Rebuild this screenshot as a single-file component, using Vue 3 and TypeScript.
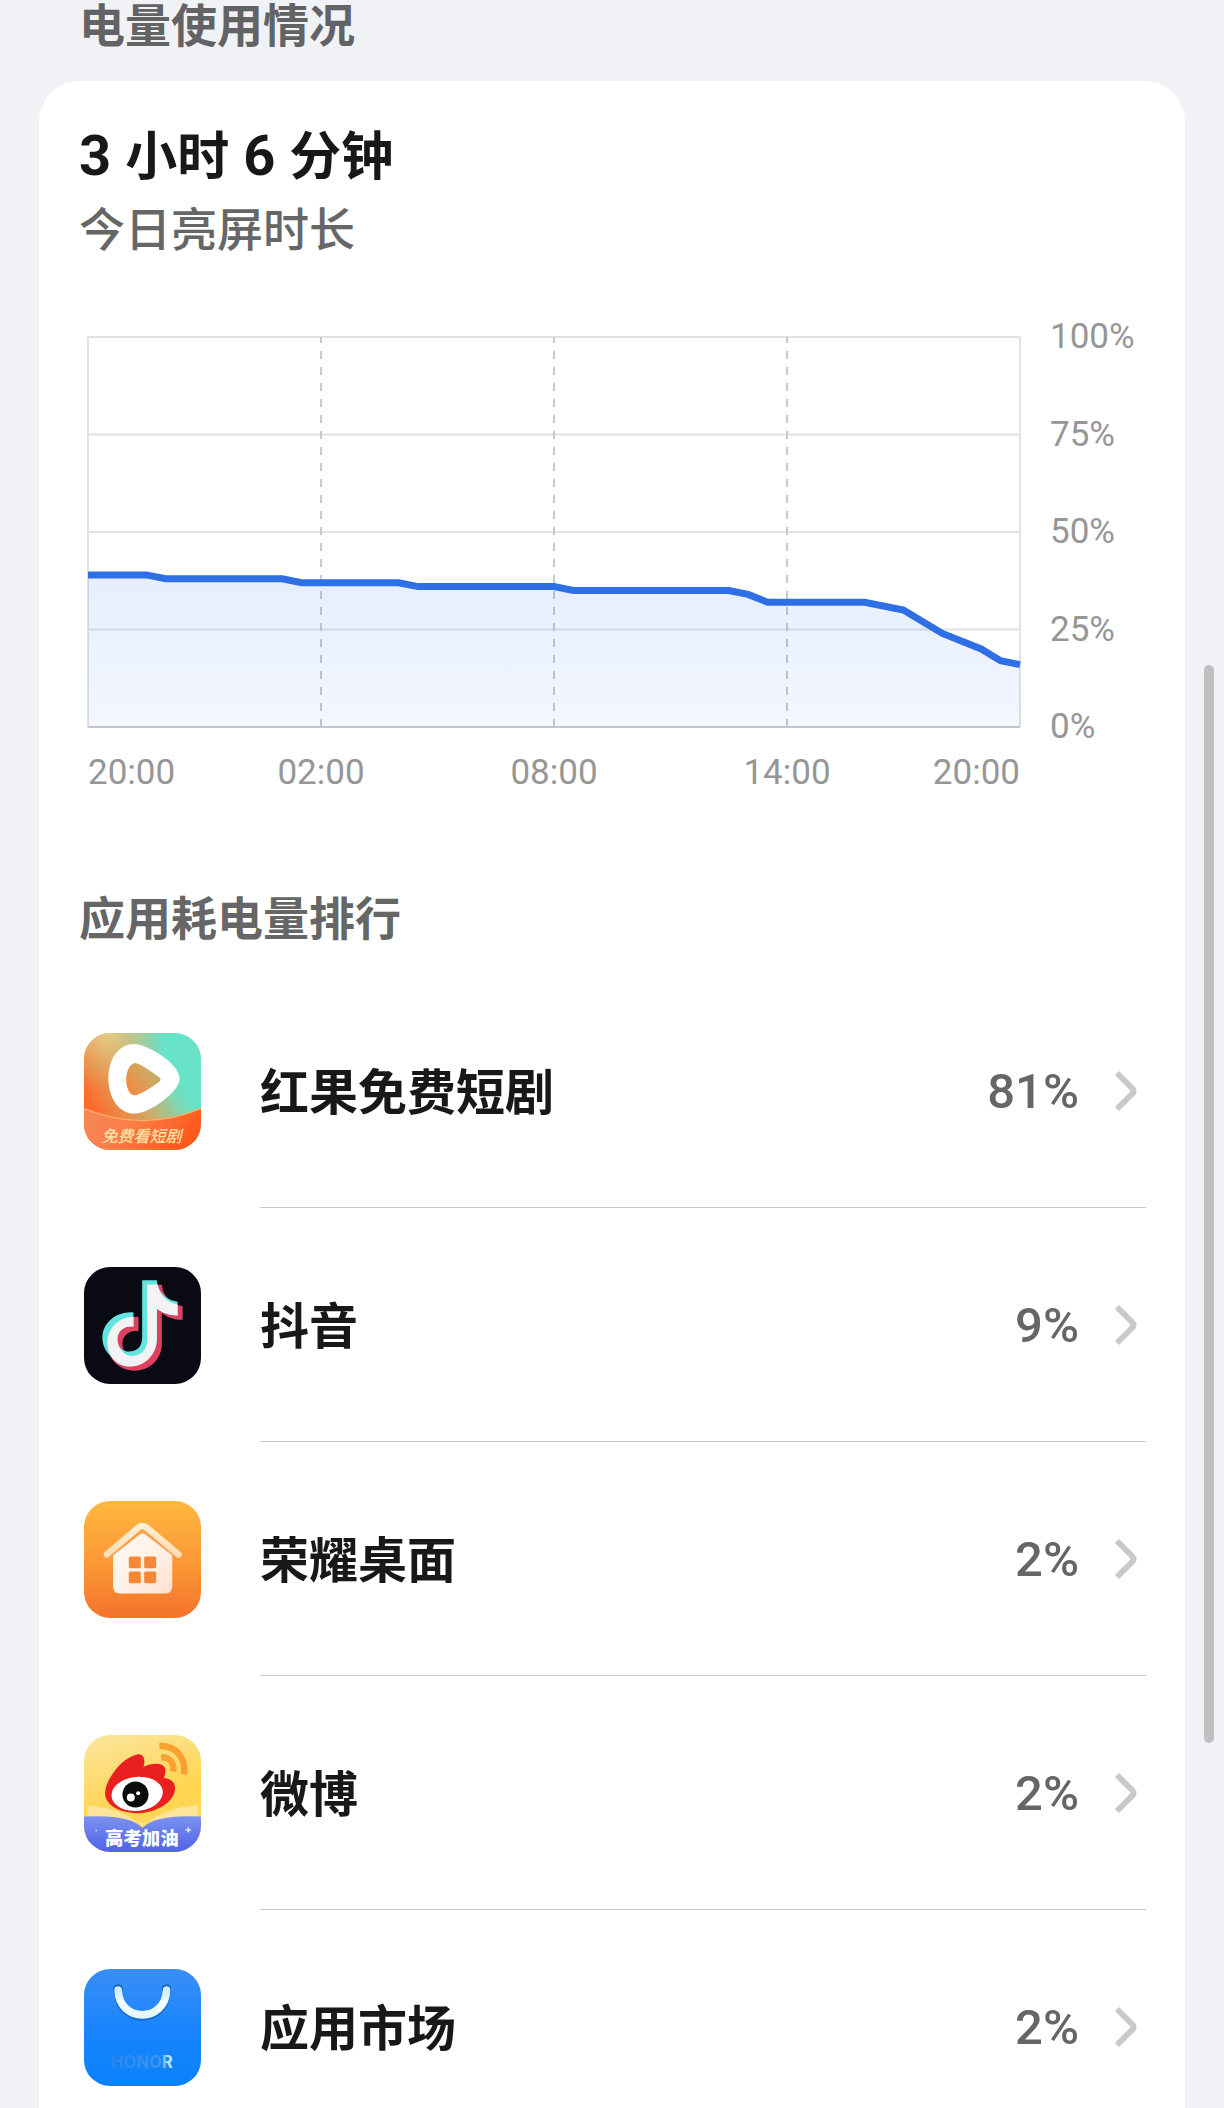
<script setup lang="ts">
type Sample = [halfHours: number, level: number]

interface AppUsage {
  id: string
  name: string
  percent: number
}

// Battery level, sampled in half-hour steps over 24 hours
const samples: Sample[] = [
  [0, 39], [3, 39], [4, 38], [10, 38], [11, 37], [16, 37], [17, 36],
  [24, 36], [25, 35], [33, 35], [34, 34], [35, 32], [40, 32], [42, 30],
  [44, 24], [46, 20], [47, 17], [48, 16],
]

const linePoints = samples.map(([x, level]) => `${x},${100 - level}`).join(' ')
const areaPoints = `0,100 ${linePoints} 48,100`

const levels = [100, 75, 50, 25, 0]
const hours = ['20:00', '02:00', '08:00', '14:00', '20:00']

const apps: AppUsage[] = [
  { id: 'hongguo', name: '红果免费短剧', percent: 81 },
  { id: 'douyin', name: '抖音', percent: 9 },
  { id: 'home', name: '荣耀桌面', percent: 2 },
  { id: 'weibo', name: '微博', percent: 2 },
  { id: 'market', name: '应用市场', percent: 2 },
]
</script>

<template>
  <div class="screen">
    <main class="page">
      <h1 class="page-title">电量使用情况</h1>

      <section class="card">
        <h2 class="duration">
          <span class="number">3</span>
          <span>小时</span>
          <span class="number">6</span>
          <span>分钟</span>
        </h2>
        <p class="duration-label">今日亮屏时长</p>

        <div class="chart">
          <div class="plot-column">
            <svg class="plot" viewBox="0 0 48 100" preserveAspectRatio="none" role="img" aria-label="电量">
              <defs>
                <linearGradient id="area" x1="0" y1="0" x2="0" y2="1">
                  <stop offset="0" stop-color="#2f74f0" stop-opacity="0.12" />
                  <stop offset="1" stop-color="#2f6fff" stop-opacity="0.06" />
                </linearGradient>
              </defs>
              <g class="grid">
                <path d="M0 0H48M0 25H48M0 50H48M0 75H48M0 0V100M48 0V100" />
                <path class="dashed" d="M12 0V100M24 0V100M36 0V100" />
                <path class="base" d="M0 100H48" />
              </g>
              <polygon :points="areaPoints" fill="url(#area)" />
              <polyline class="level-line" :points="linePoints" />
            </svg>
            <div class="hours">
              <span v-for="(hour, i) in hours" :key="i">{{ hour }}</span>
            </div>
          </div>
          <div class="levels">
            <span v-for="level in levels" :key="level">{{ level }}%</span>
          </div>
        </div>

        <h3 class="ranking-title">应用耗电量排行</h3>

        <ul class="apps">
          <li v-for="app in apps" :key="app.id">
            <a class="app" href="#">
              <svg class="icon" viewBox="44 38 350 350" aria-hidden="true">
                <defs>
                  <clipPath :id="`clip-${app.id}`">
                    <rect x="44" y="38" width="350" height="350" rx="78" />
                  </clipPath>
                </defs>
                <g :clip-path="`url(#clip-${app.id})`">
                  <template v-if="app.id === 'hongguo'">
                    <defs>
                      <linearGradient id="hg-bg" x1="0.1" y1="0.7" x2="0.75" y2="0.3">
                        <stop offset="0" stop-color="#ff6a2a" />
                        <stop offset="0.5" stop-color="#d3a863" />
                        <stop offset="0.85" stop-color="#80d8b2" />
                        <stop offset="1" stop-color="#68e2c8" />
                      </linearGradient>
                      <radialGradient id="hg-glow" cx="0.2" cy="0" r="0.5">
                        <stop offset="0" stop-color="#e8cf8c" stop-opacity="0.9" />
                        <stop offset="1" stop-color="#f2a455" stop-opacity="0" />
                      </radialGradient>
                      <linearGradient id="hg-band" x1="0" y1="0" x2="1" y2="0.3">
                        <stop offset="0" stop-color="#f58858" />
                        <stop offset="0.5" stop-color="#fb7d46" />
                        <stop offset="1" stop-color="#fd5b1c" />
                      </linearGradient>
                      <linearGradient id="hg-play" x1="0" y1="1" x2="1" y2="0.2">
                        <stop offset="0" stop-color="#fb8339" />
                        <stop offset="1" stop-color="#bdb671" />
                      </linearGradient>
                    </defs>
                    <rect x="44" y="38" width="350" height="350" fill="url(#hg-bg)" />
                    <rect x="44" y="38" width="350" height="350" fill="url(#hg-glow)" />
                    <path d="M44 264Q220 336 394 264V388H44Z" fill="url(#hg-band)" />
                    <path d="M44 264Q220 336 394 264" fill="none" stroke="#ffb268" stroke-width="4" />
                    <path d="M194 71C230 71 330 128 330 175C330 214 240 279 196 279C146 279 117 230 117 173C117 118 146 71 194 71Z" fill="#fff" />
                    <path d="M197 128Q207 126 270 171Q276 177 270 183Q212 225 195 224C180 222 170 202 170 177C170 151 183 129 197 128Z" fill="url(#hg-play)" />
                    <text x="216" y="365" class="hg-text">免费看短剧</text>
                  </template>

                  <template v-else-if="app.id === 'douyin'">
                    <rect x="44" y="38" width="350" height="350" fill="#0a0a14" />
                    <path transform="translate(15 13)" fill="#e0405f" d="M218 78H262C264 108 289 139 324 142V183C299 183 279 175 262 163V252C262 302 225 335 180 335C134 335 99 299 99 256C99 207 141 170 192 174V217C164 212 144 230 144 254C144 278 160 291 180 291C202 291 218 276 218 249Z" />
                    <path fill="#63e5df" d="M218 78H262C264 108 289 139 324 142V183C299 183 279 175 262 163V252C262 302 225 325 180 325C134 325 99 292 99 250C99 205 141 170 192 174V217C164 212 144 230 144 254C144 278 160 291 180 291C202 291 218 276 218 249Z" />
                    <path fill="#f3f2f4" d="M233 90H264C268 116 291 145 324 150V183C299 183 279 175 262 163V252C262 302 225 336 182 336C140 336 114 303 114 263C114 221 149 188 192 187V217C164 212 144 230 144 254C144 282 166 304 189 304C215 304 233 285 233 256Z" />
                  </template>

                  <template v-else-if="app.id === 'home'">
                    <defs>
                      <linearGradient id="hm-bg" x1="0" y1="0" x2="0" y2="1">
                        <stop offset="0" stop-color="#ffb73f" />
                        <stop offset="0.5" stop-color="#fb9a36" />
                        <stop offset="1" stop-color="#f4732a" />
                      </linearGradient>
                      <linearGradient id="hm-roof" x1="0" y1="0" x2="0" y2="1">
                        <stop offset="0" stop-color="#fff0d2" />
                        <stop offset="1" stop-color="#ffdcb4" />
                      </linearGradient>
                      <linearGradient id="hm-wall" x1="0" y1="0" x2="1" y2="1">
                        <stop offset="0" stop-color="#fffaf4" />
                        <stop offset="0.6" stop-color="#fff0e6" />
                        <stop offset="1" stop-color="#ffdfcb" />
                      </linearGradient>
                    </defs>
                    <rect x="44" y="38" width="350" height="350" fill="url(#hm-bg)" />
                    <path d="M131 192L209 132Q219 125 229 132L308 192V293Q308 315 286 315H153Q131 315 131 293Z" fill="url(#hm-wall)" />
                    <path d="M118 206L208 135Q219 127 230 135L322 206" fill="none" stroke="#f6a04c" stroke-width="8" />
                    <path d="M112 198L206 118Q219 108 232 118L327 198" fill="none" stroke="url(#hm-roof)" stroke-width="19" stroke-linecap="round" stroke-linejoin="round" />
                    <g fill="#f58836">
                      <rect x="178" y="204" width="36" height="35" rx="5" />
                      <rect x="224" y="204" width="36" height="35" rx="5" />
                      <rect x="178" y="249" width="36" height="35" rx="5" />
                      <rect x="224" y="249" width="36" height="35" rx="5" />
                    </g>
                  </template>

                  <template v-else-if="app.id === 'weibo'">
                    <defs>
                      <linearGradient id="wb-bg" x1="0.2" y1="0" x2="0.5" y2="1">
                        <stop offset="0" stop-color="#fce59a" />
                        <stop offset="0.6" stop-color="#ffd44f" />
                        <stop offset="1" stop-color="#ffd95f" />
                      </linearGradient>
                      <linearGradient id="wb-band" x1="0" y1="0" x2="0" y2="1">
                        <stop offset="0" stop-color="#7c92f0" />
                        <stop offset="1" stop-color="#4f63ea" />
                      </linearGradient>
                    </defs>
                    <rect x="44" y="38" width="350" height="350" fill="url(#wb-bg)" />
                    <path d="M54 248Q160 256 219 312Q278 256 384 248V300H54Z" fill="#fde49a" />
                    <path d="M44 282Q180 274 219 316Q258 274 394 282V388H44Z" fill="url(#wb-band)" />
                    <g fill="none" stroke="#f8a030" stroke-width="19">
                      <path d="M270 71C318 69 350 105 343 156" />
                      <path d="M275 105C300 104 315 120 311 147" />
                    </g>
                    <path fill="#e9201f" d="M107 214C106 173 158 104 203 96C222 95 229 109 222 133C245 122 279 119 286 136C290 147 286 158 283 166C306 170 321 181 315 207C308 244 252 273 201 272C148 270 109 249 107 214Z" />
                    <ellipse cx="203" cy="214" rx="77" ry="51" fill="#fff" transform="rotate(-6 203 214)" />
                    <circle cx="198" cy="216" r="39" fill="#0b0b0d" />
                    <circle cx="184" cy="225" r="12" fill="#fff" />
                    <circle cx="206" cy="212" r="6" fill="#fff" />
                    <path d="M356 311L359 319L367 322L359 325L356 333L353 325L345 322L353 319Z" fill="#dfe5ff" />
                    <circle cx="81" cy="324" r="3" fill="#b9c4ff" />
                    <text x="217" y="367" class="wb-text">高考加油</text>
                  </template>

                  <template v-else>
                    <defs>
                      <linearGradient id="mk-bg" x1="0" y1="0" x2="0" y2="1">
                        <stop offset="0" stop-color="#3a8ef8" />
                        <stop offset="0.5" stop-color="#1a85fc" />
                        <stop offset="1" stop-color="#0882fc" />
                      </linearGradient>
                      <linearGradient id="mk-handle" x1="0" y1="0" x2="0" y2="1">
                        <stop offset="0" stop-color="#c9eeff" />
                        <stop offset="0.5" stop-color="#f4fdff" />
                        <stop offset="1" stop-color="#e4f8ff" />
                      </linearGradient>
                      <linearGradient id="mk-brand" x1="0" y1="0" x2="1" y2="0">
                        <stop offset="0" stop-color="#2a86ee" />
                        <stop offset="0.8" stop-color="#3f94ec" />
                        <stop offset="0.92" stop-color="#b8e4fb" />
                      </linearGradient>
                    </defs>
                    <rect x="44" y="38" width="350" height="350" fill="url(#mk-bg)" />
                    <circle cx="146" cy="98" r="14" fill="#1558a8" />
                    <circle cx="291" cy="98" r="14" fill="#1558a8" />
                    <path d="M146 108C150 206 287 206 291 108" fill="none" stroke="#1470d8" stroke-width="24" stroke-linecap="round" />
                    <path d="M146 101C150 200 287 200 291 101" fill="none" stroke="url(#mk-handle)" stroke-width="23" stroke-linecap="round" />
                    <text x="217" y="333" class="mk-text" fill="url(#mk-brand)">HONOR</text>
                  </template>
                </g>
              </svg>
              <span class="app-body">
                <span class="app-name">{{ app.name }}</span>
                <span class="app-percent">{{ app.percent }}%</span>
                <svg class="chevron" viewBox="0 0 24 44" aria-hidden="true">
                  <path d="M4 4L19 19Q22 22 19 25L4 40" />
                </svg>
              </span>
            </a>
          </li>
        </ul>
      </section>
    </main>
    <div class="scroll-thumb"></div>
  </div>
</template>

<style>
body {
  margin: 0;
  background: #f1f2f6;
}
</style>

<style scoped>
.screen {
  position: relative;
  height: 100vh;
  overflow: hidden;
  background: #f1f2f6;
  font-family: "Noto Sans CJK SC", sans-serif;
  color: #181818;
}

.page {
  height: 100%;
  overflow-y: auto;
  scrollbar-width: none;
}

h1,
h2,
h3,
p,
ul {
  margin: 0;
  padding: 0;
}

.page-title {
  padding: 0 79px 37px;
  font-size: 46px;
  line-height: 44px;
  font-weight: 700;
  color: #636366;
}

.card {
  margin: 0 39px;
  padding: 34px 39px 0 40px;
  border-radius: 40px 40px 0 0;
  background: #fff;
}

.duration {
  display: flex;
  align-items: baseline;
  gap: 14px;
  font-size: 52px;
  line-height: 76px;
  font-weight: 700;
}

.number {
  font-family: Roboto, sans-serif;
  font-size: 56px;
}

.duration-label {
  font-size: 46px;
  line-height: 64px;
  font-weight: 500;
  color: #666;
}

.chart {
  display: flex;
  gap: 30px;
  margin: 79px 0 0 9px;
  font-family: Roboto, sans-serif;
  font-size: 35px;
  line-height: 40px;
  color: #969696;
}

.plot-column {
  flex: 1;
}

.plot {
  display: block;
  width: 100%;
  height: 390px;
  overflow: visible;
}

.plot path,
.plot polyline {
  fill: none;
  vector-effect: non-scaling-stroke;
}

.grid path {
  stroke: #e2e2e3;
  stroke-width: 2px;
}

.grid .dashed {
  stroke: #c8c8ca;
  stroke-dasharray: 8 8;
  stroke-dashoffset: 2;
}

.grid .base {
  stroke: #c6c7ca;
}

.plot .level-line {
  stroke: #2f6fe6;
  stroke-width: 7px;
}

.hours {
  display: grid;
  grid-template-columns: 1fr 2fr 2fr 2fr 1fr;
  margin-top: 26px;
  text-align: center;
}

.hours span:first-child {
  justify-self: start;
}

.hours span:last-child {
  justify-self: end;
}

.levels {
  display: flex;
  flex-direction: column;
  justify-content: space-between;
  width: 96px;
  height: 430px;
  margin-top: -20px;
}

.ranking-title {
  margin: 90px 0 27px;
  font-size: 46px;
  line-height: 64px;
  font-weight: 700;
  color: #666;
}

.apps {
  list-style: none;
}

.app {
  display: flex;
  align-items: center;
  gap: 59px;
  padding-left: 5px;
  color: inherit;
  text-decoration: none;
}

.icon {
  flex: none;
  width: 117px;
  height: 117px;
}

.app-body {
  display: flex;
  flex: 1;
  align-items: center;
  box-sizing: border-box;
  height: 234px;
  border-bottom: 1px solid #c8c8c8;
}

.app-name {
  flex: 1;
  padding-bottom: 4px;
  font-size: 49px;
  line-height: 72px;
  font-weight: 700;
}

.app-percent {
  padding-top: 2px;
  font-family: Roboto, sans-serif;
  font-size: 49px;
  line-height: 72px;
  font-weight: 500;
  color: #666;
}

.chevron {
  width: 24px;
  height: 44px;
  margin: 0 9px 0 34px;
  fill: none;
  stroke: #c9c9c9;
  stroke-width: 6px;
}

.hg-text,
.wb-text,
.mk-text {
  font-family: "Noto Sans CJK SC", sans-serif;
  text-anchor: middle;
}

.hg-text {
  font-size: 48px;
  font-style: italic;
  font-weight: 500;
  fill: #ffe2a6;
}

.wb-text {
  font-size: 55px;
  font-weight: 900;
  fill: #fff;
}

.mk-text {
  font-family: Inter, sans-serif;
  font-size: 50px;
  font-weight: 700;
}

.scroll-thumb {
  position: absolute;
  top: 665px;
  right: 10px;
  width: 10px;
  height: 1078px;
  border-radius: 5px;
  background: #c0c0c2;
}
</style>
